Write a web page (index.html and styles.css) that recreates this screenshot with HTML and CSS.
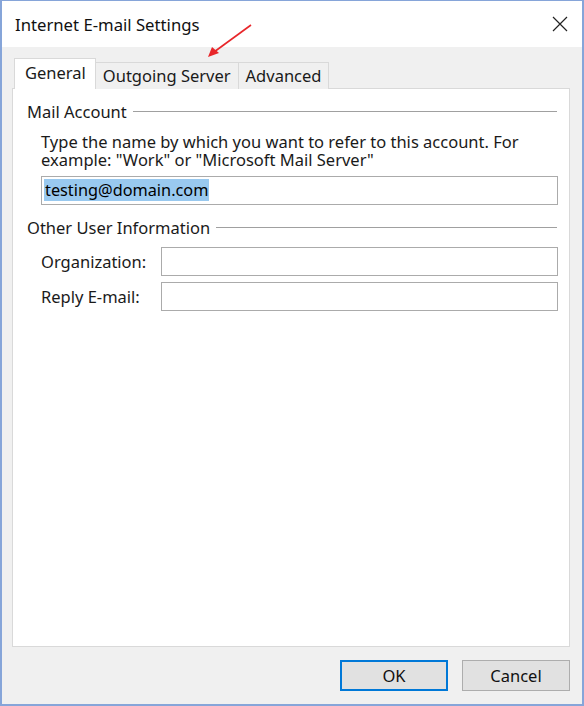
FILE: index.html
```html
<!DOCTYPE html>
<html lang="en">
<head>
    <meta charset="UTF-8">
    <meta name="viewport" content="width=device-width, initial-scale=1.0">
    <title>Internet E-mail Settings</title>
    <link rel="stylesheet" href="styles.css">
</head>
<body>
    <div class="window">
        <div class="titlebar">
            <span class="title">Internet E-mail Settings</span>
            <button class="close" aria-label="Close">
                <svg width="16" height="16" viewBox="0 0 16 16">
                    <path d="M1 1 L15 15 M15 1 L1 15" stroke="#222" stroke-width="1.2" fill="none"/>
                </svg>
            </button>
        </div>

        <div class="client">
            <div class="tabs">
                <div class="tab active">General</div>
                <div class="tab">Outgoing Server</div>
                <div class="tab">Advanced</div>
            </div>

            <div class="panel">
                <div class="group-title"><span>Mail Account</span></div>
                <p class="hint">Type the name by which you want to refer to this account. For example: "Work" or "Microsoft Mail Server"</p>
                <div class="textbox"><span class="selected">testing@domain.com</span></div>

                <div class="group-title"><span>Other User Information</span></div>
                <div class="field">
                    <label>Organization:</label>
                    <div class="textbox"></div>
                </div>
                <div class="field">
                    <label>Reply E-mail:</label>
                    <div class="textbox"></div>
                </div>
            </div>

            <div class="footer">
                <button class="btn default">OK</button>
                <button class="btn">Cancel</button>
            </div>
        </div>

        <!-- red pointer drawn on top of the dialog -->
        <svg class="pointer" width="60" height="50" viewBox="0 0 60 50">
            <line x1="49" y1="3" x2="12" y2="30" stroke="#e8262a" stroke-width="1.6"/>
            <polygon points="6,35 10,25 17,31" fill="#e8262a"/>
        </svg>
    </div>
</body>
</html>
```

FILE: styles.css
```css
* {
    box-sizing: border-box;
}
body {
    margin: 0;
    padding: 0;
    font-family: "Noto Sans", "Open Sans", sans-serif;
    color: #1a1a1a;
    background: #fff;
}
.window {
    position: relative;
    width: 584px;
    height: 706px;
    display: flex;
    flex-direction: column;
    border: 2px solid #86a5d9;
    border-top-width: 1px;
    background: #f0f0f0;
}
.titlebar {
    height: 46px;
    background: #fff;
    display: flex;
    align-items: center;
    justify-content: space-between;
    padding-left: 13px;
    padding-right: 14px;
}
.title {
    font-size: 16.7px;
    color: #111;
    padding-top: 1px;
}
.close {
    border: none;
    background: none;
    padding: 0;
    width: 16px;
    height: 16px;
    display: flex;
}
.client {
    flex: 1;
    display: flex;
    flex-direction: column;
    padding: 11px 12px 0 10px;
}
.tabs {
    display: flex;
    align-items: flex-end;
    padding-left: 2px;
    position: relative;
    z-index: 1;
    margin-bottom: -1px;
}
.tab {
    height: 27px;
    padding: 0 7px;
    font-size: 16.5px;
    line-height: 26px;
    border: 1px solid #d9d9d9;
    border-bottom: none;
    border-left: none;
    background: #f0f0f0;
}
.tab.active {
    height: 31px;
    line-height: 28px;
    padding: 0 9px 0 10px;
    background: #fff;
    border-left: 1px solid #d9d9d9;
}
.panel {
    flex: 1;
    background: #fff;
    border: 1px solid #d9d9d9;
    padding: 10px 12px 0 14px;
}
.group-title {
    display: flex;
    align-items: center;
    gap: 6px;
    height: 24px;
    font-size: 16.5px;
}
.group-title::after {
    content: "";
    flex: 1;
    height: 1px;
    background: #a0a0a0;
    margin-top: 1px;
}
.hint {
    max-width: 500px;
    margin: 10px 0 7px 14px;
    font-size: 16.5px;
    line-height: 18px;
}
.textbox {
    height: 29px;
    border: 1px solid #ababab;
    background: #fff;
    margin-left: 14px;
    padding: 2px 2px;
    font-size: 16.3px;
    line-height: 22px;
    margin-right: -1px;
}
.selected {
    background: #99c9ef;
    color: #000;
    padding: 0 1px;
}
.group-title + .field {
    margin-top: 8px;
}
.panel .textbox + .group-title {
    margin-top: 10px;
}
.field {
    display: flex;
    align-items: center;
    margin-bottom: 6px;
}
.field label {
    width: 134px;
    padding-left: 14px;
    font-size: 16.5px;
}
.field .textbox {
    flex: 1;
    margin-left: 0;
}
.footer {
    height: 57px;
    display: flex;
    justify-content: flex-end;
    gap: 14px;
    padding-top: 13px;
}
.btn {
    width: 108px;
    height: 31px;
    font-family: inherit;
    font-size: 16.5px;
    color: #111;
    background: #e1e1e1;
    border: 1px solid #adadad;
}
.btn.default {
    border: 2px solid #0078d7;
}
.pointer {
    position: absolute;
    left: 200px;
    top: 21px;
}
```
